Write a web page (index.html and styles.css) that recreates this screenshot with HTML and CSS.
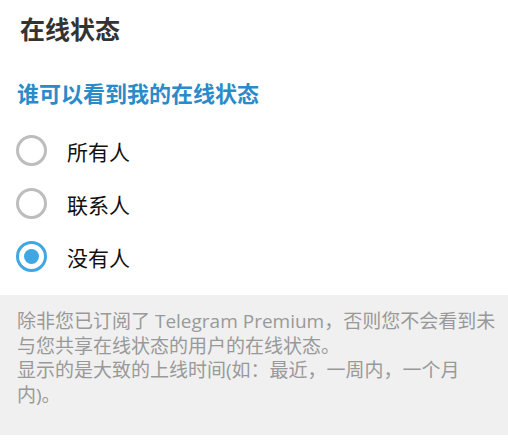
FILE: index.html
```html
<!DOCTYPE html>
<html lang="zh-CN">
<head>
    <meta charset="UTF-8">
    <meta name="viewport" content="width=device-width, initial-scale=1.0">
    <title>在线状态</title>
    <link rel="stylesheet" href="styles.css">
</head>
<body>
    <div class="box">
        <div class="box-title">在线状态</div>

        <div class="section-title">谁可以看到我的在线状态</div>

        <div class="options">
            <label class="option">
                <span class="radio"></span>
                <span class="option-text">所有人</span>
            </label>
            <label class="option">
                <span class="radio"></span>
                <span class="option-text">联系人</span>
            </label>
            <label class="option">
                <span class="radio checked"></span>
                <span class="option-text">没有人</span>
            </label>
        </div>

        <div class="about">
            除非您已订阅了 Telegram Premium，否则您不会看到未与您共享在线状态的用户的在线状态。<br>
            显示的是大致的上线时间(如：最近，一周内，一个月内)。
        </div>
    </div>
</body>
</html>
```

FILE: styles.css
```css
body {
    margin: 0;
    background-color: #fff;
    font-family: "Open Sans", "Noto Sans CJK SC", sans-serif;
}
.box {
    width: 508px;
    padding-bottom: 7px;
}
.box-title {
    height: 60px;
    box-sizing: border-box;
    display: flex;
    align-items: center;
    padding: 0 20px 4px 20px;
    font-size: 25px;
    font-weight: bold;
    color: #333;
}
.section-title {
    margin-top: 18px;
    padding: 0 17px;
    line-height: 30px;
    font-size: 22px;
    font-weight: bold;
    color: #2a8bc9;
}
.options {
    padding: 16px 0 12px 0;
}
.option {
    display: flex;
    align-items: center;
    height: 53px;
    padding-left: 16px;
    cursor: pointer;
}
.radio {
    box-sizing: border-box;
    width: 31px;
    height: 31px;
    border: 3px solid #bdbdbd;
    border-radius: 50%;
    display: flex;
    align-items: center;
    justify-content: center;
}
.radio.checked {
    border-color: #40a7e3;
}
.radio.checked::after {
    content: "";
    width: 15px;
    height: 15px;
    border-radius: 50%;
    background-color: #40a7e3;
}
.option-text {
    margin-left: 20px;
    font-size: 21px;
    color: #111;
}
.about {
    background-color: #f0f0f0;
    padding: 14px 10px 28px 17px;
    font-size: 19px;
    line-height: 24.5px;
    color: #999;
}
```
